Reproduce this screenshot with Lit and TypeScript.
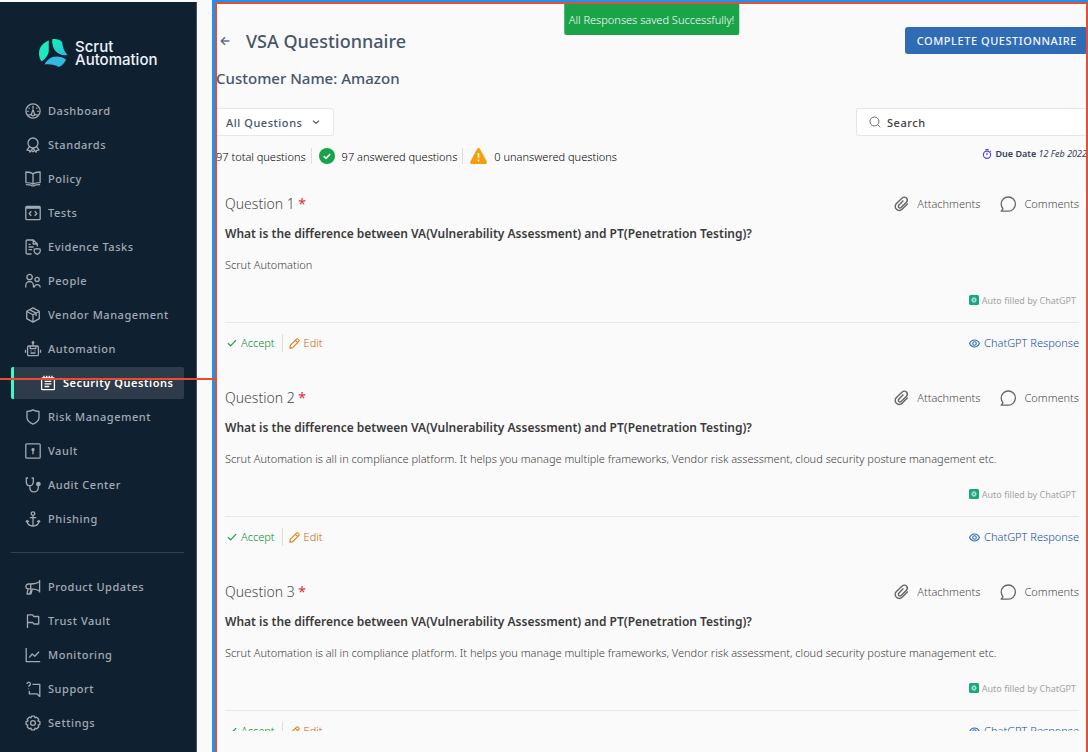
import { LitElement, html, css, svg, SVGTemplateResult } from "lit";
import { customElement, property, state } from "lit/decorators.js";
import { classMap } from "lit/directives/class-map.js";

/* Line icons on a 16 unit grid. */
const ICONS: Record<string, SVGTemplateResult> = {
  dashboard: svg`<circle cx="8" cy="8" r="7.1"/><path d="M8 2.8v3M3.6 4.6l1 1M12.4 4.6l-1 1M2.2 8.4h1.5M12.3 8.4h1.5M3 12.2c1.4-.5 2.6-.6 3.4-.6M13 12.2c-1.4-.5-2.6-.6-3.4-.6"/><path d="M8 6.6 6.6 10.6a1.6 1.6 0 1 0 2.8 0z"/>`,
  standards: svg`<circle cx="8" cy="6" r="5"/><path d="M4.4 9.6 2 13.2l2.3.1.7 1.9L8 11.2l3 4 .7-1.9 2.3-.1-2.4-3.6"/><path d="M6.2 13.2 8 14.8l1.8-1.6"/>`,
  policy: svg`<path d="M8 3C6.500 1.500 4.500 1 .9 1v10.600c3.600 0 5.600.4 7.100 1.600 1.500-1.200 3.500-1.600 7.100-1.600V1C11.500 1 9.500 1.500 8 3zM8 3v10M.9 13.700c2.900 0 5.300.2 6.100 1.200h2c.8-1 3.200-1.200 6.100-1.200"/>`,
  tests: svg`<rect x=".8" y="1.500" width="14.400" height="13.200" rx="1"/><path d="M1 2.800h14" stroke-width="2"/><path d="M6.300 6.300 4.200 8.500l2.100 2.200M9.700 6.300l2.100 2.200-2.100 2.200"/>`,
  evidence: svg`<path d="M6.500 15H2.300a1.200 1.200 0 0 1-1.200-1.200V2.200A1.200 1.200 0 0 1 2.300 1h6l4 4v2.500M8.200 1.200V5h4M3.600 5.300h2M3.600 8h5M3.600 10.600h3.500"/><path d="M9.200 10.200 12.200 9.600l3 .6v2.300c0 1.500-1.500 2.200-3 2.900-1.500-.7-3-1.400-3-2.900z"/>`,
  people: svg`<circle cx="4.600" cy="4" r="2.700"/><circle cx="12.100" cy="6.400" r="2.100"/><path d="M.8 14.600v-2.300a3.800 3.800 0 0 1 7.600 0v2.300M9.400 14.600c0-4 5.800-4 5.800 0"/>`,
  vendor: svg`<path d="M8 .9 14.300 4.300v7.300L8 15.100 1.700 11.600V4.300zM1.900 4.500 8 7.800l6.100-3.300M8 7.800V15M4.800 2.800l6.300 3.300v3"/>`,
  automation: svg`<rect x="2.600" y="5" width="10.800" height="9.600" rx="1.200"/><path d="M8 1.800V5M5.200 5.200v2.400h5.600V5.200M5.500 12h5M.5 8.800v3M15.500 8.800v3M5.500 9.900h1M9.500 9.900h1"/><circle cx="8" cy="1.500" r=".8"/>`,
  security: svg`<path d="M2.600 3h10.800a1 1 0 0 1 1 1v9.700a1 1 0 0 1-1 1H2.600a1 1 0 0 1-1-1V4a1 1 0 0 1 1-1z"/><path d="M4 .8v2.600M6.700.8v2.600M9.300.8v2.600M12 .8v2.600M4.600 6.300h6.800M4.600 8.900h6.800M4.600 11.500h4.600"/>`,
  risk: svg`<path d="M8 .9C6.300 2 4.300 2.400 2 2.400v6.200c0 3 2.500 5 6 6.600 3.500-1.600 6-3.600 6-6.600V2.400C11.700 2.400 9.700 2 8 .9z"/>`,
  vault: svg`<rect x=".8" y=".8" width="14.400" height="14.400" rx="1"/><circle cx="8" cy="6.600" r="1" fill="currentColor"/><path d="M8 7v4.200"/>`,
  audit: svg`<path d="M3 1H1.300v3.400c0 2.600 1.300 4.300 3.500 4.300S8.300 7 8.300 4.400V1H6.600M4.900 8.800v1.600c0 6 8.400 6 8.400.2V8.600"/><circle cx="13.400" cy="7" r="1.700" fill="currentColor"/>`,
  phishing: svg`<circle cx="8" cy="2.600" r="1.800"/><path d="M8 4.500v10.600M4.800 6.700h6.400M2 9.600c.2 3.400 2.600 5.300 6 5.500 3.400-.2 5.800-2.100 6-5.500M.9 11.200 2 9.500l2 1.300M15.100 11.200 14 9.500l-2 1.300"/>`,
  product: svg`<path d="M14.600 1v12.400M14.600 2.600C12 4.600 9 5 5.500 5H3.300a2.300 2.300 0 0 0 0 4.800h2.200c3.500 0 6.500.4 9.100 2.400M5.700 5v4.800M3 9.800 2 15h2.700l1.700-5M7.300 10 6 14.800H4.500"/>`,
  trust: svg`<path d="M2.500 15V1.800h5.200l1 1.700h5V11H8.800L7.800 9.500H2.500"/>`,
  monitoring: svg`<path d="M1.200 1v13.600h14M4.200 10.600l3-3.600 2.600 2.200 4.200-4.400"/>`,
  support: svg`<path d="M7.500 3.400h7.300v12l-2.700-2.500H4.300v-3"/><path d="M2 2.900a1.700 1.700 0 1 1 2.600 1.500c-.6.4-1 .7-1 1.300M3.600 7.500v.7"/>`,
  settings: svg`<circle cx="8" cy="8" r="2.400"/><path d="M6.600 1.100h2.800l.6 1.700 1.700-.6 2 2-.7 1.600 1.900.8v2.800l-1.800.7.7 1.700-2 2-1.700-.7-.7 1.800H6.600l-.7-1.800-1.700.7-2-2 .7-1.700-1.800-.7V6.600l1.900-.8-.8-1.600 2-2 1.800.6z"/>`,
  back: svg`<path d="M15 8H2M8 2 2 8l6 6"/>`,
  chevron: svg`<path d="m2 5.200 6 5.600 6-5.600"/>`,
  search: svg`<circle cx="7.300" cy="7.300" r="6"/><path d="m11.800 11.800 3.200 3.200"/>`,
  timer: svg`<circle cx="8" cy="9.200" r="5.800"/><path d="M5.500 1h5M8 5.800v3.600M13 3l1.200 1.200"/>`,
  clip: svg`<path d="M13.900 7.200 8.200 13a4 4 0 0 1-5.700 0 4 4 0 0 1 0-5.700L8.300 1.700a2.900 2.900 0 0 1 4.200 0 3 3 0 0 1 0 4.200L7.200 11.200a1.600 1.600 0 0 1-2.300 0 1.600 1.600 0 0 1 0-2.300L9.500 4.300" transform="translate(.9 .3)"/>`,
  comment: svg`<path d="M1.200 15.200h7.100a7.100 7.100 0 1 0-7.100-7.100c0 1.900.7 3.400 1.800 4.700z"/>`,
  check: svg`<path d="m1.500 8.500 4.300 4 8.700-9"/>`,
  pencil: svg`<path d="m1.200 14.800.8-4.300L11 1.600a1.500 1.500 0 0 1 2.100 0l1.300 1.300a1.500 1.500 0 0 1 0 2.100l-9 9zM9.300 3.500l3.300 3.300"/>`,
  eye: svg`<path d="M.8 8C2.500 4.700 5 3 8 3s5.500 1.700 7.200 5c-1.700 3.300-4.200 5-7.200 5S2.500 11.300.8 8z"/><circle cx="8" cy="8" r="2.600"/>`,
};

@customElement("line-icon")
class LineIcon extends LitElement {
  @property() name = "";
  @property({ type: Number }) size = 16;
  @property({ type: Number }) weight = 1.3;

  static styles = css`
    :host { display: inline-flex; flex: none; }
    .glyph {
      display: block;
      overflow: visible;
      fill: none;
      stroke: currentColor;
      stroke-linejoin: round;
    }
  `;

  render() {
    return html`<svg class="glyph" viewBox="0 0 16 16" width=${this.size} height=${this.size}
      stroke-width=${this.weight} aria-hidden="true">${ICONS[this.name]}</svg>`;
  }
}

interface NavItem { icon: string; label: string; }

const PRIMARY: NavItem[] = [
  { icon: "dashboard", label: "Dashboard" },
  { icon: "standards", label: "Standards" },
  { icon: "policy", label: "Policy" },
  { icon: "tests", label: "Tests" },
  { icon: "evidence", label: "Evidence Tasks" },
  { icon: "people", label: "People" },
  { icon: "vendor", label: "Vendor Management" },
  { icon: "automation", label: "Automation" },
  { icon: "security", label: "Security Questions" },
  { icon: "risk", label: "Risk Management" },
  { icon: "vault", label: "Vault" },
  { icon: "audit", label: "Audit Center" },
  { icon: "phishing", label: "Phishing" },
];

const SECONDARY: NavItem[] = [
  { icon: "product", label: "Product Updates" },
  { icon: "trust", label: "Trust Vault" },
  { icon: "monitoring", label: "Monitoring" },
  { icon: "support", label: "Support" },
  { icon: "settings", label: "Settings" },
];

@customElement("side-nav")
class SideNav extends LitElement {
  @state() current = "Security Questions";

  static styles = css`
    :host {
      display: block;
      box-sizing: border-box;
      padding: 35px 12px 0 11px;
      background: #0f2031;
      border-right: 1px solid #45525f;
      overflow: hidden;
    }
    .brand {
      display: flex;
      align-items: center;
      gap: 7px;
      height: 32px;
      margin: 0 0 26px 27px;
      color: #eef2f8;
      font: 500 15px/13px Inter, sans-serif;
    }
    .mark { flex: none; }
    .list {
      display: flex;
      flex-direction: column;
      gap: 2px;
      margin: 0;
      padding: 0;
      list-style: none;
    }
    .link {
      display: flex;
      align-items: center;
      gap: 7px;
      height: 32px;
      padding-left: 14px;
      box-sizing: border-box;
      border-radius: 2px;
      color: #a3aab2;
      font-size: 11px;
      font-weight: 500;
      line-height: 16px;
      letter-spacing: 0.05em;
      text-decoration: none;
      white-space: nowrap;
    }
    .active {
      padding-left: 26px;
      border-left: 3px solid #3dfac5;
      background: #2d3b4a;
      color: #fff;
      font-weight: 600;
    }
    .rule {
      height: 1px;
      margin: 17px 0 18px;
      border: 0;
      background: #34424f;
    }
  `;

  private items(list: NavItem[]) {
    return html`<ul class="list">
      ${list.map(({ icon, label }) => html`<li>
        <a href="#" class=${classMap({ link: true, active: label === this.current })}
          @click=${(e: Event) => { e.preventDefault(); this.current = label; }}>
          <line-icon name=${icon}></line-icon><span>${label}</span>
        </a></li>`)}
    </ul>`;
  }

  render() {
    return html`
      <div class="brand">
        <svg class="mark" viewBox="0 0 30 30" width="30" height="30" aria-hidden="true">
          <defs>
            <linearGradient id="g" x1="0" y1="0" x2="1" y2="1">
              <stop offset="0" stop-color="#0ff5b4"/><stop offset="1" stop-color="#35b5e0"/>
            </linearGradient>
          </defs>
          <path fill="#1ee8bd" d="M11 2.500C5.500 4.500 1.500 8.500 1 14.500c0 3.500.7 6.500 2.500 9C7 21 10.600 17.500 10.800 12.500 11 9 10.500 6 11 2.500z"/>
          <path fill="url(#g)" d="M14.200 1.300c3.800-.7 8 .5 10 3 .5 5 2 9.500 5.300 12.700-4.500.8-9.500-.5-12.500-4.500-2.200-3.200-3-7-2.800-11.200z"/>
          <path fill="#31b9df" d="M6.500 26.500c2.500-4.500 6.500-8 12-8 3.800 0 7 1.200 9.500 3-1.500 3.500-3.700 6-7 7.500-4-2.200-9-3.200-14.500-2.500z"/>
        </svg>
        <span>Scrut<br>Automation</span>
      </div>
      <nav aria-label="Main">
        ${this.items(PRIMARY)}
        <hr class="rule">
        ${this.items(SECONDARY)}
      </nav>`;
  }
}

@customElement("question-card")
class QuestionCard extends LitElement {
  @property({ type: Number }) number = 1;
  @property() question = "";
  @property() answer = "";

  static styles = css`
    :host { display: block; padding-bottom: 34px; }
    .row { display: flex; align-items: center; justify-content: space-between; }
    .group { display: flex; align-items: center; }
    .head { height: 24px; margin-bottom: 8px; }
    .label { color: #4a4a4a; font-size: 14px; font-weight: 300; line-height: 24px; }
    .star { color: #e02b3c; font-weight: 400; }
    .title {
      margin: 0 0 12px;
      color: #3a3a3a;
      font-size: 12px;
      font-weight: 600;
      line-height: 20px;
    }
    .answer {
      margin: 0 0 18px;
      color: #3c3c3c;
      font-size: 11px;
      font-weight: 300;
      line-height: 18px;
    }
    .auto {
      display: flex;
      align-items: center;
      justify-content: flex-end;
      gap: 3px;
      height: 16px;
      padding: 0 3px 14px 0;
      border-bottom: 1px solid #e8e8e8;
      margin-bottom: 11px;
      color: #a3a3a3;
      font-size: 9px;
    }
    .action {
      display: inline-flex;
      align-items: center;
      padding: 0;
      border: 0;
      background: none;
      color: #4a4a4a;
      font: inherit;
      font-size: 11px;
      font-weight: 300;
      line-height: 18px;
      cursor: pointer;
    }
    .tools { gap: 20px; }
    .tools .action { gap: 8px; }
    .foot .action { gap: 4px; }
    .foot .accept { padding: 0 7px 0 2px; color: #008a30; }
    .foot .edit { padding-left: 6px; border-left: 1px solid #ddd; color: #d06400; }
    .foot .reply { color: #0a4fa8; }
    .tools line-icon { color: #666; }
    .accept line-icon { color: #16a34a; }
    .edit line-icon { color: #e07b0c; }
    .reply line-icon { color: #2f6eba; }
  `;

  render() {
    return html`
      <div class="row head">
        <span class="label">Question ${this.number} <span class="star">*</span></span>
        <div class="group tools">
          <button class="action"><line-icon name="clip" weight="1.4"></line-icon>Attachments</button>
          <button class="action"><line-icon name="comment"></line-icon>Comments</button>
        </div>
      </div>
      <h3 class="title">${this.question}</h3>
      <p class="answer">${this.answer}</p>
      <div class="auto">
        <svg viewBox="0 0 10 10" width="10" height="10" aria-hidden="true">
          <rect width="10" height="10" rx="1.500" fill="#17a67f"/>
          <g fill="none" stroke="#d5f3ea" stroke-width=".5">
            <ellipse cx="5" cy="5" rx="2.600" ry="1.300"/>
            <ellipse cx="5" cy="5" rx="2.600" ry="1.300" transform="rotate(60 5 5)"/>
            <ellipse cx="5" cy="5" rx="2.600" ry="1.300" transform="rotate(120 5 5)"/>
          </g>
        </svg>
        <span>Auto filled by ChatGPT</span>
      </div>
      <div class="row foot">
        <div class="group">
          <button class="action accept"><line-icon name="check" size="10" weight="2"></line-icon>Accept</button>
          <button class="action edit"><line-icon name="pencil" size="11" weight="1.5"></line-icon>Edit</button>
        </div>
        <button class="action reply"><line-icon name="eye" size="11" weight="1.6"></line-icon>ChatGPT Response</button>
      </div>`;
  }
}

const PROMPT = "What is the difference between VA(Vulnerability Assessment) and PT(Penetration Testing)?";
const LONG_ANSWER = "Scrut Automation is all in compliance platform. It helps you manage multiple frameworks, Vendor risk assessment, cloud security posture management etc.";

@customElement("app-root")
class AppRoot extends LitElement {
  @state() questions = [
    { question: PROMPT, answer: "Scrut Automation" },
    { question: PROMPT, answer: LONG_ANSWER },
    { question: PROMPT, answer: LONG_ANSWER },
  ];

  static styles = css`
    :host {
      display: grid;
      grid-template-columns: 197px minmax(0, 1fr);
      column-gap: 15px;
      position: relative;
      box-sizing: border-box;
      height: 100vh;
      overflow: hidden;
      background: #fafafa;
      color: #222;
      font-family: "Noto Sans", sans-serif;
      font-size: 11px;
    }
    .nav { margin-top: 2px; }
    .frame {
      box-sizing: border-box;
      min-height: 0;
      border: solid #1495fb;
      border-width: 2px 0 0 3px;
    }
    .pane {
      position: relative;
      display: flex;
      flex-direction: column;
      box-sizing: border-box;
      height: 100%;
      padding: 0 0 21px 1px;
    }
    /* Highlight drawn over the pane's own edges. */
    .outline {
      position: absolute;
      inset: 0;
      border: solid #e84e2e;
      border-width: 2px 2px 0;
      pointer-events: none;
    }
    .connector {
      position: absolute;
      top: 378px;
      left: 0;
      width: 216px;
      height: 2px;
      background: #ee4a2b;
    }
    .toast {
      position: absolute;
      top: 0;
      left: 50%;
      transform: translateX(-50%);
      padding: 2px 5px 0;
      border-radius: 0 0 2px 2px;
      background: #1aa349;
      color: #fff;
      font-weight: 300;
      line-height: 31px;
      white-space: nowrap;
    }
    .top {
      display: flex;
      align-items: center;
      height: 28px;
      margin-top: 25px;
    }
    .back {
      display: flex;
      margin: 0 16px 0 0;
      padding: 0 0 0 4px;
      border: 0;
      background: none;
      color: #5a6a85;
    }
    .heading { flex: 1; margin: 0; color: #475569; font-size: 18px; font-weight: 500; line-height: 28px; }
    .complete {
      align-self: flex-start;
      height: 27px;
      padding: 0 11px 0 12px;
      border: 0;
      border-radius: 3px 0 0 3px;
      background: #2f6cb5;
      color: #f3f7fc;
      font: inherit;
      font-weight: 500;
      letter-spacing: 0.05em;
    }
    .customer { margin: 12px 0 19px; color: #475569; font-size: 15px; font-weight: 500; line-height: 22px; }
    .filters { display: flex; justify-content: space-between; height: 28px; }
    .picker { position: relative; display: flex; align-items: center; color: #475569; }
    .select {
      appearance: none;
      width: 118px;
      height: 28px;
      padding: 0 0 0 10px;
      border: 1px solid #e2e8f0;
      border-left: 0;
      border-radius: 0 3px 3px 0;
      background: #fff;
      color: inherit;
      font: inherit;
      font-weight: 500;
      letter-spacing: 0.05em;
    }
    .arrow { position: absolute; right: 14px; pointer-events: none; }
    .search {
      display: flex;
      align-items: center;
      gap: 6px;
      box-sizing: border-box;
      width: 232px;
      padding-left: 12px;
      border: 1px solid #e5e5e5;
      border-right: 0;
      border-radius: 3px 0 0 3px;
      background: #fff;
      color: #666;
    }
    .input {
      flex: 1;
      min-width: 0;
      padding: 0;
      border: 0;
      outline: 0;
      background: none;
      font: inherit;
      font-weight: 500;
      letter-spacing: 0.05em;
    }
    .input::placeholder { color: #404040; opacity: 1; }
    .stats { display: flex; justify-content: space-between; height: 16px; margin: 12px 0 28px; }
    .counts { display: flex; align-items: center; color: #000; font-weight: 300; }
    .count { display: flex; align-items: center; gap: 7px; height: 16px; padding-right: 5px; }
    .count + .count { padding-left: 7px; border-left: 1px solid #ddd; }
    .due { display: flex; align-items: center; gap: 4px; height: 11px; padding-right: 1px; color: #334155; font-size: 9px; white-space: nowrap; }
    .due-icon { color: #4f46e5; }
    .due-label { font-weight: 600; }
    .list { flex: 1; min-height: 0; overflow-y: auto; scrollbar-width: none; padding: 0 9px; }
  `;

  render() {
    return html`
      <side-nav class="nav"></side-nav>
      <div class="frame">
        <main class="pane">
          <header class="top">
            <button class="back" aria-label="Back"><line-icon name="back" size="10" weight="2.4"></line-icon></button>
            <h1 class="heading">VSA Questionnaire</h1>
            <button class="complete">COMPLETE QUESTIONNAIRE</button>
          </header>
          <h2 class="customer">Customer Name: Amazon</h2>
          <div class="filters">
            <div class="picker">
              <select class="select" aria-label="Filter questions">
                <option>All Questions</option>
                <option>Answered</option>
                <option>Unanswered</option>
              </select>
              <line-icon class="arrow" name="chevron" size="8" weight="2.4"></line-icon>
            </div>
            <label class="search">
              <line-icon name="search" size="12"></line-icon>
              <input class="input" type="search" placeholder="Search" aria-label="Search">
            </label>
          </div>
          <div class="stats">
            <div class="counts">
              <span class="count">97 total questions</span>
              <span class="count">
                <svg viewBox="0 0 16 16" width="16" height="16" aria-hidden="true">
                  <circle cx="8" cy="8" r="8" fill="#16a34a"/>
                  <path d="m4.800 8.200 2.200 2.100 4.200-4.300" fill="none" stroke="#fff" stroke-width="1.600"/>
                </svg>97 answered questions</span>
              <span class="count">
                <svg viewBox="0 0 17 16" width="17" height="16" aria-hidden="true">
                  <path d="M7 1a1.700 1.700 0 0 1 3 0l6.700 12.500c.6 1.200 0 2.500-1.500 2.500H1.800C.3 16-.3 14.700.3 13.500z" fill="#f59e0b"/>
                  <path d="M8.500 5v5M8.500 11.500v1.800" stroke="#fff" stroke-width="1.500"/>
                </svg>0 unanswered questions</span>
            </div>
            <span class="due">
              <line-icon class="due-icon" name="timer" size="10" weight="1.8"></line-icon>
              <span><span class="due-label">Due Date</span> <em>12 Feb 2022</em></span>
            </span>
          </div>
          <section class="list" aria-label="Questions">
            ${this.questions.map((q, i) => html`<question-card .number=${i + 1}
              .question=${q.question} .answer=${q.answer}></question-card>`)}
          </section>
          <div class="toast" role="status">All Responses saved Successfully!</div>
          <div class="outline"></div>
        </main>
      </div>
      <div class="connector"></div>`;
  }
}
